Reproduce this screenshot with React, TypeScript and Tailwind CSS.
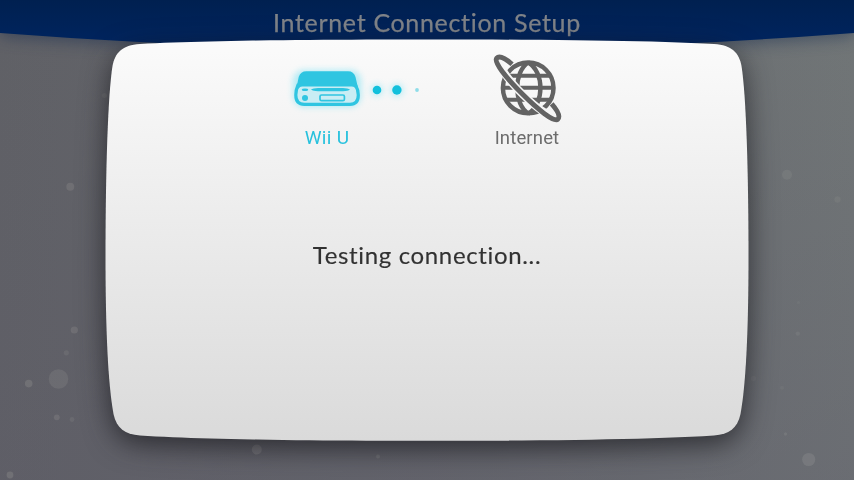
const particles = [
  { x: 70.3, y: 186.7, r: 4, o: 0.13 },
  { x: 104.5, y: 95.5, r: 2.5, o: 0.08 },
  { x: 74.3, y: 330, r: 3.6, o: 0.13 },
  { x: 66.3, y: 352.8, r: 2.6, o: 0.09 },
  { x: 58.5, y: 379, r: 9.8, o: 0.1 },
  { x: 28.7, y: 383.6, r: 3.8, o: 0.15 },
  { x: 56.8, y: 417.3, r: 2.9, o: 0.13 },
  { x: 72, y: 419.5, r: 2.4, o: 0.09 },
  { x: 10, y: 475, r: 3.4, o: 0.15 },
  { x: 256.8, y: 449.5, r: 5, o: 0.16 },
  { x: 378, y: 456.5, r: 2, o: 0.12 },
  { x: 787, y: 174.8, r: 5, o: 0.08 },
  { x: 837.5, y: 199.5, r: 3.2, o: 0.07 },
  { x: 797.8, y: 333.6, r: 2.2, o: 0.08 },
  { x: 798.5, y: 302.5, r: 1.6, o: 0.05 },
  { x: 753.5, y: 378.3, r: 2.6, o: 0.06 },
  { x: 782, y: 387.8, r: 2, o: 0.05 },
  { x: 785.5, y: 434, r: 1.7, o: 0.1 },
  { x: 808.7, y: 459.5, r: 6.6, o: 0.12 },
];

function Particles() {
  return (
    <svg className="absolute inset-0" width="854" height="480" viewBox="0 0 854 480" aria-hidden="true">
      {particles.map((p) => (
        <circle key={`${p.x}-${p.y}`} cx={p.x} cy={p.y} r={p.r} fill="#d8d4cc" opacity={p.o} />
      ))}
    </svg>
  );
}

function ConsoleIcon() {
  return (
    <svg width="86" height="56" viewBox="284 61 86 56" className="overflow-visible" aria-hidden="true">
      <defs>
        <filter id="glow" x="-30%" y="-40%" width="160%" height="180%">
          <feGaussianBlur stdDeviation="3.2" />
        </filter>
      </defs>
      <rect x="293" y="70" width="68" height="37" rx="11" fill="#5fdcf2" opacity="0.45" filter="url(#glow)" />
      <path d="M298 85 L355.500 85 Q358.300 90 358.300 95 Q358.300 104.300 350 104.300 H304.300 Q295.800 104.300 295.800 95 Q295.800 90 298 85Z" fill="#c9edf4" stroke="#2fc5e1" strokeWidth="3.200" />
      <path d="M296 90 L298.700 77 Q300.500 71.300 306.500 71.300 H348 Q353.800 71.300 355.500 77 L358.500 90 L358 91 Q354 85 347 85 H307 Q300 85 296.500 91Z" fill="#2fc5e1" />
      <ellipse cx="305" cy="89.700" rx="3.200" ry="1.300" fill="#2fc5e1" />
      <path d="M311 89.600 Q313 88 318 88 H343 Q348 88 350 89.600 Q348 91.200 343 91.200 H318 Q313 91.200 311 89.600Z" fill="#2fc5e1" />
      <circle cx="305" cy="98" r="3" fill="#2fc5e1" />
      <rect x="320" y="95" width="24.400" height="5.700" rx="1.500" fill="#c9edf4" stroke="#2fc5e1" strokeWidth="1.700" />
    </svg>
  );
}

function ProgressDots() {
  return (
    <svg width="60" height="20" viewBox="367 80 60 20" className="overflow-visible" aria-hidden="true">
      <g filter="url(#glow)" fill="#7fe3f4" opacity="0.5">
        <circle cx="377" cy="90" r="6" />
        <circle cx="397" cy="90" r="6.500" />
      </g>
      <circle cx="377" cy="90" r="4.300" fill="#12c0dc" />
      <circle cx="396.900" cy="90" r="4.700" fill="#12c0dc" />
      <circle cx="417" cy="90" r="1.900" fill="#8fdde9" />
    </svg>
  );
}

function GlobeIcon() {
  return (
    <svg width="70" height="70" viewBox="492 54 70 70" fill="none" stroke="#636363" aria-hidden="true">
      <circle cx="528.200" cy="87.900" r="25.300" strokeWidth="4.500" />
      <path d="M506 75.700H550.500M503 87.800H553.500M506 99.800H550.500" strokeWidth="4" />
      <path d="M528.300 62.500C513.500 72 513.500 104 528.300 113.500M528.300 62.500C544.500 72 544.500 104 528.300 113.500" strokeWidth="4.400" />
      <g transform="translate(527.200 88.700) rotate(45)">
        <path d="M-42.500 -3C-39 5 -18 7.200 0 7.200S39 5 42.500 -3" stroke="#f6f6f6" strokeWidth="8" />
        <path d="M-28 -6.600C-37 -6 -43.200 -4 -43.200 0C-43.200 5 -22 7.200 0 7.200S43.200 5 43.200 0C43.200 -4 37 -6 28 -6.600" strokeWidth="4.900" />
      </g>
    </svg>
  );
}

export default function App() {
  return (
    <div className="relative flex h-[480px] w-[854px] flex-col overflow-hidden bg-linear-to-r from-[#606166] via-[#66686d] to-[#717677] font-['Lato','Liberation_Sans',sans-serif]">
      <div className="absolute inset-0 bg-linear-to-b from-transparent to-[#5b5868]/30" />
      <Particles />

      <div className="relative h-[50px] shrink-0 drop-shadow-[0_3px_8px_rgba(10,35,75,0.45)]">
        <header className="flex h-full justify-center bg-linear-to-b from-[#002050] to-[#002561] [clip-path:path('M0_0H854V33Q427_66_0_33Z')]">
          <h1 className="mt-1 text-[25px] leading-9 tracking-[0.68px] whitespace-nowrap text-[#808489] [-webkit-text-stroke:0.25px_#808489]">
            Internet Connection Setup
          </h1>
        </header>
      </div>

      <div className="relative -mt-[11px] flex h-[402px] w-[644px] flex-col self-center drop-shadow-[0_8px_14px_rgba(20,20,24,0.7)]">
        <main className="flex h-full flex-col items-center bg-linear-to-b from-[#fbfbfb] to-[#dadada] [clip-path:path('M35_5C100_1.500_200_0.500_322_0.500C444_0.500_544_1.500_609_5C627_6_634_14_636.500_27C641_55_643.500_130_643.500_218C643.500_290_641_345_635.500_375C632.500_389_624_395.500_609_396.500C544_400.500_444_401.800_322_401.800C200_401.800_100_400.500_35_396.500C20_395.500_11.500_389_8.500_375C3_345_0.500_290_0.500_218C0.500_130_3_55_7.500_27C10_14_17_6_35_5Z')]">
          <section className="mt-[15px] flex h-[97px] w-[286px] items-start font-['Roboto','Liberation_Sans',sans-serif]">
            <div className="flex w-[86px] flex-col items-center pt-[7px]">
              <ConsoleIcon />
              <span className="mt-2 text-[19px] leading-[26px] tracking-[0.3px] text-[#27c1dd]">Wii U</span>
            </div>
            <div className="mt-[26px] -ml-[3px]">
              <ProgressDots />
            </div>
            <div className="ml-[65px] flex w-[70px] flex-col items-center">
              <GlobeIcon />
              <span className="mt-px text-[18.5px] leading-[26px] tracking-[0.15px] text-[#6c6c6c]">Internet</span>
            </div>
          </section>
          <p className="mt-[88px] text-[24px] leading-[32px] tracking-[0.65px] whitespace-nowrap text-[#323232] [-webkit-text-stroke:0.15px_#323232]">
            Testing connection...
          </p>
        </main>
      </div>
    </div>
  );
}
